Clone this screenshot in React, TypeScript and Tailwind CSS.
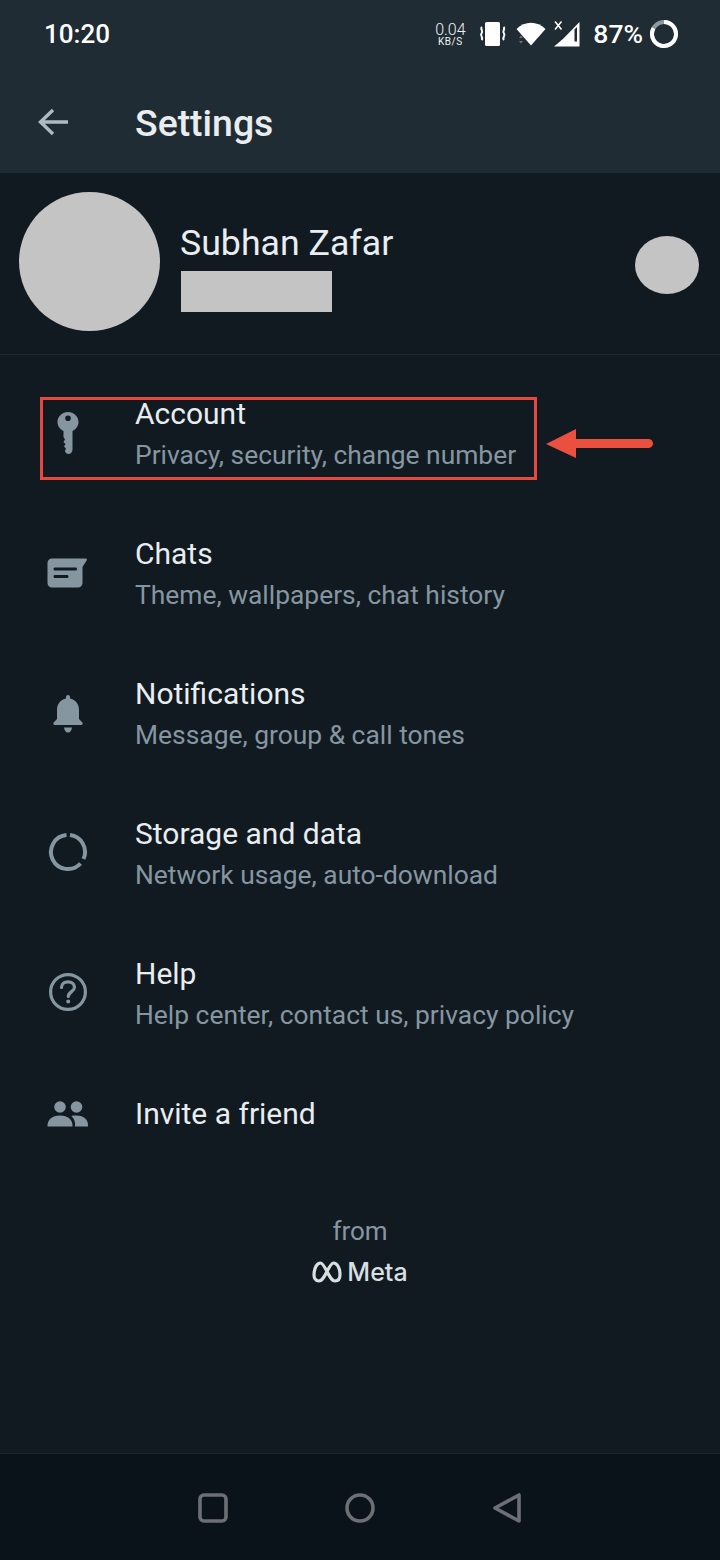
const rows = [
  { title: "Account", sub: "Privacy, security, change number", icon: <KeyIcon /> },
  { title: "Chats", sub: "Theme, wallpapers, chat history", icon: <ChatIcon /> },
  { title: "Notifications", sub: "Message, group & call tones", icon: <BellIcon /> },
  { title: "Storage and data", sub: "Network usage, auto-download", icon: <StorageIcon /> },
  { title: "Help", sub: "Help center, contact us, privacy policy", icon: <HelpIcon /> },
];

function KeyIcon() {
  return (
    <svg className="mb-[3px]" width="24" height="44" viewBox="0 0 24 44" fill="#8696a0">
      <path fillRule="evenodd" d="M12 1C17.8 1 22.5 5.5 22.5 11C22.5 15 20 18.3 16.5 20V38.5C16.5 41 14.5 43 12.5 43C10.5 43 9 41.5 9 39.5L10 37.5L8 35.5L9.5 33L7.5 31L9 28.5L7.5 26V20C4 18.3 1.5 15 1.5 11C1.5 5.5 6.2 1 12 1ZM12 4.5A2.8 2.8 0 1 0 12 10.1A2.8 2.8 0 1 0 12 4.5Z" />
    </svg>
  );
}
function ChatIcon() {
  return (
    <svg className="mb-[3px] mr-[2px]" width="40" height="30" viewBox="0 0 40 30" fill="#8696a0">
      <path fillRule="evenodd" d="M5 0.5H38.5C39.8 0.5 40.3 1.5 39.6 2.5L35.5 9V25C35.5 27.5 33.5 29.5 31 29.5H5C2.5 29.5 0.5 27.5 0.5 25V5C0.5 2.5 2.5 0.5 5 0.5ZM8 9.5C7 9.5 6.5 10.2 6.5 11C6.5 11.8 7 12.5 8 12.5H28.5C29.5 12.5 30 11.8 30 11C30 10.2 29.5 9.5 28.5 9.5ZM8 17C7 17 6.5 17.7 6.5 18.5C6.5 19.3 7 20 8 20H20C21 20 21.5 19.3 21.5 18.5C21.5 17.7 21 17 20 17Z" />
    </svg>
  );
}
function BellIcon() {
  return (
    <svg className="mb-[1px]" width="30" height="38" viewBox="0 0 30 38" fill="#8696a0">
      <path d="M15 0C16.2 0 17 0.9 17 2V3.4C22.5 4.5 26 9 26 14.5V24L29.3 27.5C30.2 28.6 29.6 30 28.2 30H1.8C0.4 30 -0.2 28.6 0.7 27.5L4 24V14.5C4 9 7.5 4.5 13 3.4V2C13 0.9 13.8 0 15 0Z" />
      <path d="M11 32.5H19C18.6 35.5 17 37.5 15 37.5C13 37.5 11.4 35.5 11 32.5Z" />
    </svg>
  );
}
function StorageIcon() {
  return (
    <svg className="mb-[4px]" width="40" height="40" viewBox="0 0 40 40" fill="none" stroke="#8696a0" strokeWidth="4">
      <path d="M18.5 3.1A17 17 0 1 0 32.5 31.5" />
      <path d="M22 3.1A17 17 0 0 1 35.5 27" />
    </svg>
  );
}
function HelpIcon() {
  return (
    <svg className="mb-[4px]" width="40" height="40" viewBox="0 0 40 40" fill="none" stroke="#8696a0" strokeWidth="3.2">
      <circle cx="20" cy="20" r="17.4" />
      <path d="M13.5 15.5C13.5 12 16.5 9.8 20 9.8C23.5 9.8 26.5 12 26.5 15.2C26.5 19.5 20.3 19.8 20.3 24.5" strokeLinecap="round" />
      <circle cx="20.2" cy="29.5" r="2" fill="#8696a0" stroke="none" />
    </svg>
  );
}
function PeopleIcon() {
  return (
    <svg width="42" height="26" viewBox="0 0 42 26" fill="#8696a0">
      <circle cx="13" cy="6" r="5.8" />
      <circle cx="29.5" cy="6" r="5.8" />
      <path d="M0.5 25.5C0 19 5 14.5 13 14.5C21 14.5 26 19 25.5 25.5Z" />
      <path d="M28 25.5C28.6 21 27 17.3 24.3 15C25.8 14.6 27.5 14.5 29.5 14.5C37 14.5 41.5 18.5 41 25.5Z" />
    </svg>
  );
}

function Row({ title, sub, icon }: { title: string; sub: string; icon: React.ReactNode }) {
  return (
    <div className="flex h-[140px] items-center">
      <div className="flex w-[135px] shrink-0 justify-center">{icon}</div>
      <div className="flex flex-col">
        <div className="text-[30px] leading-[36px] text-[#e9edef]">{title}</div>
        <div className="mt-[5px] text-[26.4px] leading-[36px] text-[#8696a0]">{sub}</div>
      </div>
    </div>
  );
}

function StatusIcons() {
  return (
    <div className="flex items-center">
      <div className="flex w-[32px] flex-col items-center text-[#eef1f2]">
        <span className="text-[16px] font-light leading-[15px]">0.04</span>
        <span className="text-[10px] leading-[10px] tracking-[0.5px]">KB/S</span>
      </div>
      <svg className="ml-[13px]" width="28" height="26" viewBox="0 0 28 26" fill="none" stroke="#fff" strokeWidth="2">
        <rect x="6" y="1" width="15" height="24" rx="1.5" fill="#fff" stroke="none" />
        <path d="M3 6C0.5 8 5 10 2.5 12.5C0.5 14.5 5 16.5 2.5 19" />
        <path d="M24.5 6C27 8 22.5 10 25 12.5C27 14.5 22.5 16.5 25 19" />
      </svg>
      <svg className="ml-[9px]" width="32" height="26" viewBox="0 0 32 26">
        <path d="M15 24.5L0.5 8C9 -0.5 21 -0.5 29.5 8Z" fill="#fff" />
        <path d="M3 17L5 14.5L7 17ZM3 20L5 22.5L7 20Z" fill="#6b7780" />
      </svg>
      <svg className="ml-[5px]" width="28" height="28" viewBox="0 0 28 28">
        <path d="M26.5 2V26.5H1L10 19Z" fill="#fff" />
        <path d="M21.5 9.5V21.5H7.5Z" fill="#fff" />
        <path d="M21.5 21.5H24V7L21.5 9.5Z" fill="#202c33" />
        <path d="M2 1.5L8.5 9.5M8.5 1.5L2 9.5" stroke="#fff" strokeWidth="1.6" />
      </svg>
      <span className="ml-[12px] text-[26.5px] font-medium leading-[30px] text-white">87%</span>
      <svg className="ml-[6px]" width="30" height="30" viewBox="0 0 30 30" fill="none" strokeWidth="4">
        <circle cx="15" cy="15" r="12" stroke="#8f989e" />
        <path d="M15 3A12 12 0 1 1 4.5 9.2" stroke="#fff" />
      </svg>
    </div>
  );
}

export default function App() {
  return (
    <div className="relative flex h-[1560px] w-[720px] flex-col overflow-hidden bg-[#111a21] font-['Roboto',sans-serif]">
      <header className="flex h-[173px] shrink-0 flex-col bg-[#202c33]">
        <div className="flex h-[68px] items-center justify-between pl-[44px] pr-[41px]">
          <span className="text-[26px] font-medium text-white">10:20</span>
          <StatusIcons />
        </div>
        <div className="flex h-[105px] items-center pt-[3px]">
          <div className="flex w-[135px] items-center pl-[38px]">
            <svg width="30" height="28" viewBox="0 0 30 28" fill="none" stroke="#aebac1" strokeWidth="3.4">
              <path d="M30 14H3M15 2L2.5 14L15 26" />
            </svg>
          </div>
          <h1 className="mt-[2px] text-[37.4px] font-medium leading-[48px] text-[#e9edef]">Settings</h1>
        </div>
      </header>

      <section className="flex h-[182px] shrink-0 items-start border-b border-[#202a31]">
        <div className="ml-[19px] mt-[19px] h-[139px] w-[141px] rounded-[50%] bg-[#c4c4c4]" />
        <div className="ml-[20px] flex-1">
          <div className="mt-[48px] text-[35.7px] leading-[44px] text-[#e9edef]">Subhan Zafar</div>
          <div className="ml-[1px] mt-[6px] h-[41px] w-[151px] bg-[#c4c4c4]" />
        </div>
        <div className="mr-[21px] mt-[63px] h-[58px] w-[64px] rounded-[50%] bg-[#c4c4c4]" />
      </section>

      <main className="flex-1 pt-[9px]">
        {rows.map((r) => (
          <Row key={r.title} title={r.title} sub={r.sub} icon={r.icon} />
        ))}
        <div className="flex h-[100px] items-center">
          <div className="flex w-[135px] shrink-0 justify-center">
            <PeopleIcon />
          </div>
          <div className="text-[30px] leading-[36px] text-[#e9edef]">Invite a friend</div>
        </div>
        <div className="mt-[51px] flex flex-col items-center">
          <span className="text-[26px] leading-[32px] text-[#8696a0]">from</span>
          <div className="mt-[9px] flex items-center">
            <svg width="30" height="22" viewBox="0 0 30 22" fill="none" stroke="#d9dee1" strokeWidth="3.2">
              <path d="M2 14C2 7 5 2 8.5 2C13 2 17 20 23 20C26.5 20 28 17 28 13.5C28 7 25 2 21.5 2C17 2 13 20 7 20C3.5 20 2 17 2 14Z" />
            </svg>
            <span className="ml-[5px] font-['Inter',sans-serif] text-[25px] font-medium leading-[32px] text-[#d9dee1]">Meta</span>
          </div>
        </div>
      </main>

      <nav className="flex h-[107px] shrink-0 items-center justify-center gap-[117px] border-t border-[#1a242b] bg-[#0b131a] pt-[2px]">
        <svg width="30" height="30" viewBox="0 0 30 30" fill="none" stroke="#6c7074" strokeWidth="3.6">
          <rect x="2" y="2" width="26" height="26" rx="4" />
        </svg>
        <svg width="30" height="30" viewBox="0 0 30 30" fill="none" stroke="#6c7074" strokeWidth="3.6">
          <circle cx="15" cy="15" r="13" />
        </svg>
        <svg width="30" height="30" viewBox="0 0 30 30" fill="none" stroke="#6c7074" strokeWidth="3.6" strokeLinejoin="round">
          <path d="M27 2V28L3 15Z" />
        </svg>
      </nav>

      <div className="absolute left-[40px] top-[397px] h-[83px] w-[497px] border-[3px] border-[#e5493f]" />
      <svg className="absolute left-[545px] top-[428px]" width="110" height="32" viewBox="0 0 110 32" fill="#e9503f">
        <path d="M1 16L31 1V11H103C106 11 108 13 108 15.5C108 18 106 20 103 20H31V30Z" />
      </svg>
    </div>
  );
}
